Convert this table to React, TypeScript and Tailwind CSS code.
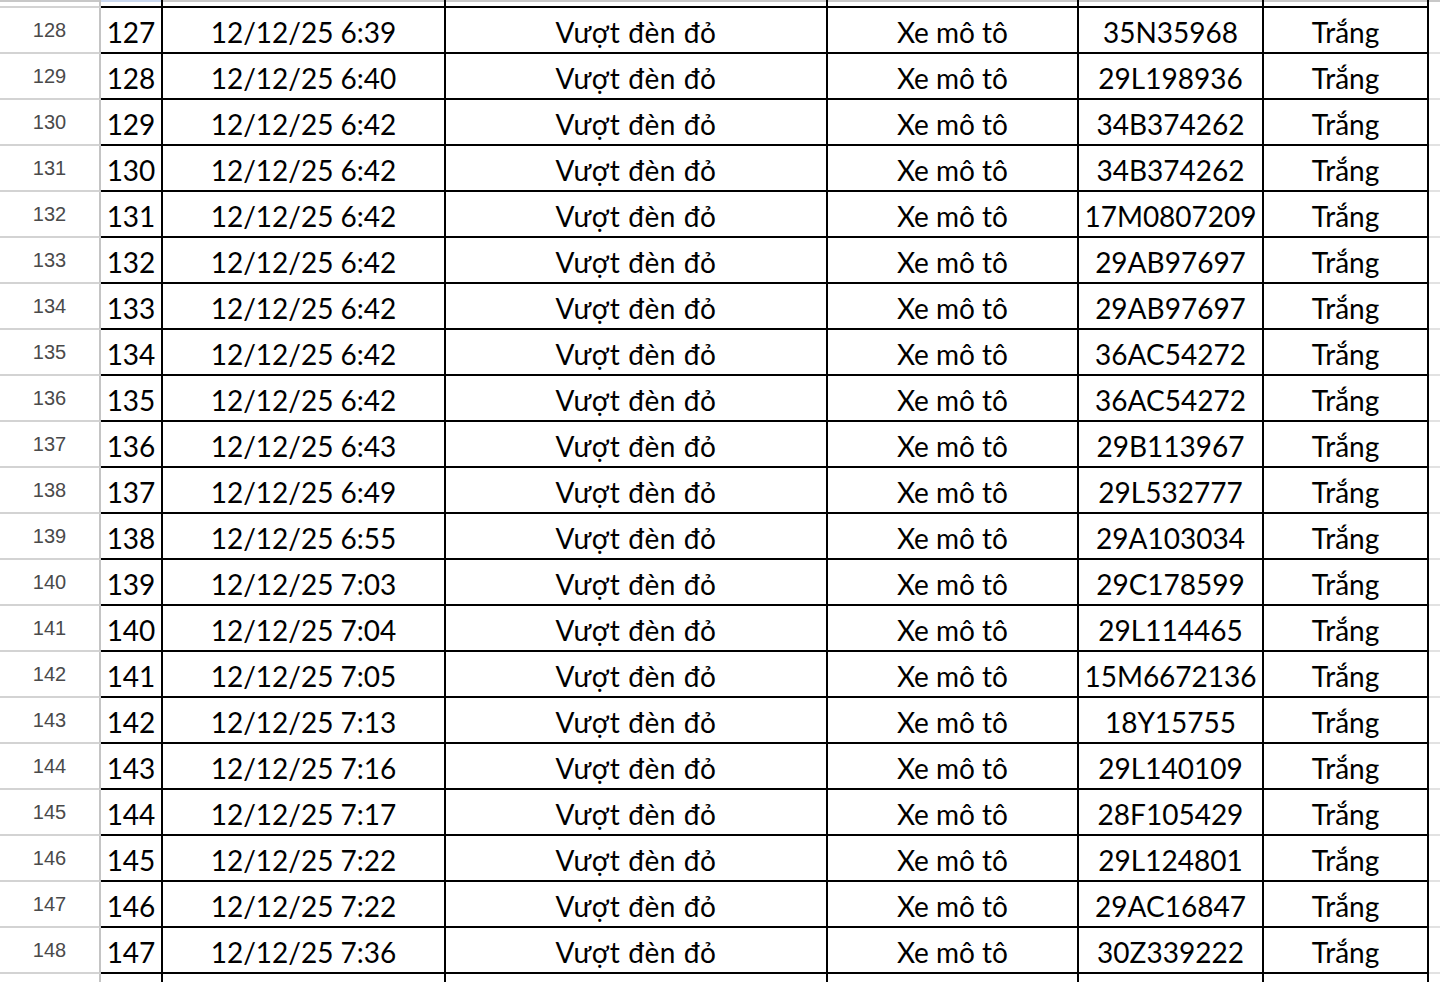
const rows: [string, string][] = [
  ["6:39", "35N35968"],
  ["6:40", "29L198936"],
  ["6:42", "34B374262"],
  ["6:42", "34B374262"],
  ["6:42", "17M0807209"],
  ["6:42", "29AB97697"],
  ["6:42", "29AB97697"],
  ["6:42", "36AC54272"],
  ["6:42", "36AC54272"],
  ["6:43", "29B113967"],
  ["6:49", "29L532777"],
  ["6:55", "29A103034"],
  ["7:03", "29C178599"],
  ["7:04", "29L114465"],
  ["7:05", "15M6672136"],
  ["7:13", "18Y15755"],
  ["7:16", "29L140109"],
  ["7:17", "28F105429"],
  ["7:22", "29L124801"],
  ["7:22", "29AC16847"],
  ["7:36", "30Z339222"],
];

// widths include the 2px right border
const cols = ["w-[62px]", "w-[283px]", "w-[382px]", "w-[251px]", "w-[185px]", "w-[165px]"];

const cell =
  "shrink-0 border-r-2 border-b-2 border-black flex justify-center items-start pt-[10px] text-[28px] leading-[28px] text-black whitespace-nowrap";

const Row = ({ n, time, plate }: { n: number; time: string; plate: string }) => (
  <div className="flex h-[46px]">
    <div className="w-[101px] shrink-0 border-r-2 border-b-2 border-r-[#c4c4c4] border-b-[#d3d3d3] flex items-center justify-center text-[20px] leading-[22px] text-[#4a4a4a] font-['Liberation_Sans',Arial,sans-serif]">
      {n + 1}
    </div>
    <div className={`${cols[0]} ${cell}`}>{n}</div>
    <div className={`${cols[1]} ${cell}`}>12/12/25 {time}</div>
    <div className={`${cols[2]} ${cell} tracking-[0.6px]`}>Vượt đèn đỏ</div>
    <div className={`${cols[3]} ${cell}`}>Xe mô tô</div>
    <div className={`${cols[4]} ${cell}`}>{plate}</div>
    <div className={`${cols[5]} ${cell}`}>Trắng</div>
    <div className="flex-1 border-b-2 border-[#e2e2e2]" />
  </div>
);

export default function App() {
  return (
    <div className="w-[1440px] h-[982px] overflow-hidden bg-white font-['Lato','Noto_Sans',sans-serif]">
      {/* top partial row */}
      <div className="flex h-[8px]">
        <div className="w-[101px] shrink-0 border-r-2 border-r-[#c4c4c4] border-b-2 border-b-[#d3d3d3] flex flex-col">
          <div className="h-[2px] bg-[#c8c8c8]" />
        </div>
        {cols.map((w, i) => (
          <div key={i} className={`${w} shrink-0 border-r-2 border-b-2 border-black flex flex-col`}>
            <div className={`h-[2px] ${i === 0 ? "bg-[#c9d7ef]" : "bg-[#c8c8c8]"}`} />
          </div>
        ))}
        <div className="flex-1 flex flex-col">
          <div className="h-[2px] bg-[#c8c8c8]" />
        </div>
      </div>
      {rows.map(([time, plate], i) => (
        <Row key={i} n={127 + i} time={time} plate={plate} />
      ))}
      {/* bottom partial row */}
      <div className="flex h-[20px]">
        <div className="w-[101px] shrink-0 border-r-2 border-r-[#c4c4c4]" />
        {cols.map((w, i) => (
          <div key={i} className={`${w} shrink-0 border-r-2 border-black`} />
        ))}
        <div className="flex-1" />
      </div>
    </div>
  );
}
